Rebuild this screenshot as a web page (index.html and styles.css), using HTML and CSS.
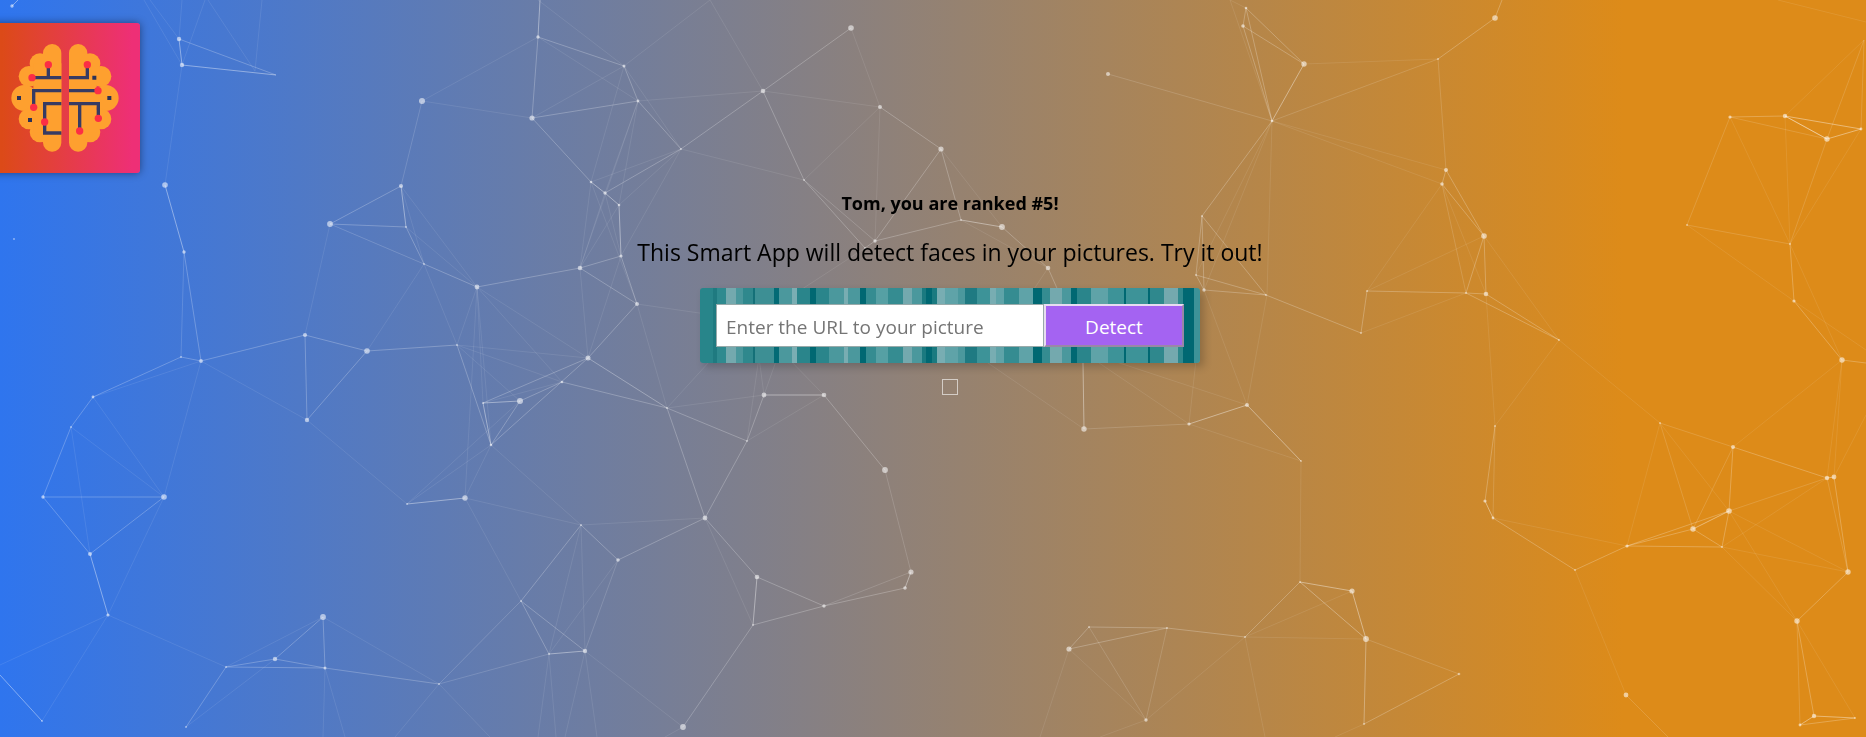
FILE: index.html
```html
<!DOCTYPE html>
<html lang="en">
<head>
<meta charset="utf-8">
<meta name="viewport" content="width=device-width, initial-scale=1">
<title>Smart App</title>
<link rel="stylesheet" href="styles.css">
</head>
<body>
<svg class="particles" viewBox="0 0 1866 737" preserveAspectRatio="xMidYMid slice" aria-hidden="true">
  <g class="links">
    <path class="link-strong" d="M1304 64L1272 121M12 6L18 0M591 182L605 193L619 205L621 256M1785 116L1861 129L1827 139ZM1693 529L1729 511M1485 501L1493 518M1827 478L1834 477M1814 716L1855 718M1814 716L1800 725M483 403L520 401M483 403L491 445M549 654L585 651M407 504L465 498M764 395L824 395M911 572L905 588M961 220L1002 227M1189 424L1247 405L1301 461M1300 582L1352 591L1366 639M179 39L182 65L276 75M757 577L753 625M165 185L184 252M401 186L406 227M1084 429L1083 363M538 37L540 0M108 615L90 554M0 675L42 721"/>
    <path class="link-medium" d="M179 39L276 75M875 241L961 220M865 248L875 241M181 357L201 361M1272 121L1246 8M1272 121L1243 26M1693 529L1722 547L1729 511M538 37L624 66L638 101L681 149L763 91L851 28M538 37L532 118L591 182M532 118L638 101M681 149L605 193M880 107L941 149L875 241M401 186L330 224L406 227L424 264L477 287L580 268L621 256M580 268L637 304L588 358L483 403M637 304L621 256M305 335L367 351L457 345L491 445M367 351L307 420L305 335M305 335L201 361M562 382L520 401L491 445L588 358M562 382L667 408L747 441L705 518L618 560L581 525L521 601L585 651M764 395L747 441M885 470L824 395M824 606L753 625M705 518L757 577L824 606L905 588M667 408L588 358M667 408L705 518M521 601L549 654M763 91L804 180L865 248M1002 227L1048 268L1060 295M941 149L961 220M1272 121L1202 216L1196 275L1204 290L1202 216L1266 295L1204 290M1196 275L1266 295L1361 333L1367 291L1466 293L1486 294L1484 236L1466 293M1246 8L1304 64L1243 26ZM1438 59L1495 18L1502 0M1446 170L1442 184L1484 236L1446 170M1466 293L1559 340L1486 294M1730 117L1785 116L1827 139M1790 244L1794 301L1842 360L1866 363M93 397L71 427L43 497L164 497L90 554L43 497M93 397L181 357M184 252L201 361M226 667L275 659L325 668L323 617L275 659M226 667L325 668M226 667L186 727M1089 627L1167 628L1245 637L1300 582L1366 639L1364 724L1459 674M1069 649L1089 627M1069 649L1167 628M1495 426L1485 501M1493 518L1575 570L1627 546L1693 529M1627 546L1722 547M1627 546L1729 511M1827 478L1733 447L1729 511M1848 572L1834 477M1848 572L1797 621L1814 716M1800 725L1855 718"/>
    <path class="link-low" d="M1108 74L1272 121L1438 59L1446 170M1466 293L1442 184M1730 117L1827 139M1730 117L1687 225L1790 244L1827 139L1864 40L1861 129M181 357L184 252M325 668L439 684L549 654M1167 628L1146 720L1089 627M1459 674L1366 639M1084 429L1189 424M1495 426L1493 518M1729 511L1827 478L1848 572M1733 447L1660 423L1693 529L1733 447M1797 621L1800 725M1626 695L1668 737M422 101L401 186M683 727L753 625M885 470L911 572L824 606M585 651L618 560"/>
    <path class="link-faint" d="M624 66L710 0L763 91L880 107L851 28M638 101L763 91M624 66L532 118M538 37L638 101L580 268M624 66L591 182L681 149L619 205M624 66L681 149L621 256M638 101L605 193M638 101L619 205M681 149L804 180L880 107L875 241M804 180L875 241M538 37L422 101L532 118M538 0L624 66M591 182L637 304M605 193L580 268L619 205M591 182L580 268L588 358L621 256M605 193L621 256M401 186L477 287L406 227M401 186L424 264L330 224L305 335M330 224L424 264L367 351M477 287L457 345M477 287L483 403L562 382L477 287L491 445M457 345L588 358L667 408M457 345L520 401M457 345L562 382M477 287L465 498L491 445M477 287L588 358M424 264L457 345M307 420L201 361L93 397L164 497L71 427L90 554M307 420L407 504L520 401M407 504L491 445M465 498L581 525L705 518M465 498L521 601L439 684M491 445L581 525L585 651M581 525L549 654L618 560M705 518L753 625L683 727M747 441L824 395M667 408L764 395M764 395L780 350M764 395L758 350M824 395L780 350M747 441L760 350M667 408L637 304L720 316M667 408L720 350M865 248L770 310M941 149L1002 227M1048 268L1020 310M804 180L875 241M961 220L1048 268M1272 121L1196 275M1272 121L1204 290M1272 121L1267 295L1247 405M1272 121L1442 184M1272 121L1446 170M1304 64L1438 59M1246 8L1230 0L1272 121M1442 184L1367 291L1484 236M1442 184L1486 294M1466 293L1361 333M1484 236L1559 340L1660 423L1627 546M1559 340L1495 426L1486 294M1785 116L1790 244L1861 129M1785 116L1864 40M1730 117L1790 244L1842 360M1687 225L1794 301L1866 350M1660 423L1729 511L1848 572L1722 547L1827 478L1842 360L1834 477L1866 415M1733 447L1842 360M1729 511L1797 621L1722 547M1797 621L1855 718M1493 518L1627 546M1575 570L1626 695M1778 0L1866 22M1301 461L1300 582M1301 461L1189 424L1080 350L1247 405L1204 290M1189 424L1196 360M1084 429L940 330M1245 637L1366 639M1245 637L1352 591M1245 637L1146 720L1069 649L1040 737M1245 637L1265 737M1366 639L1364 724L1335 737M1300 582L1366 639M1146 720L1100 737M144 0L182 65M150 0L179 39M179 39L182 0M182 65L205 0M182 65L165 185M208 0L255 71L262 0M108 615L226 667L323 617L439 684L325 668M108 615L42 721M108 615L0 665M108 615L164 497L201 361M186 727L275 659M325 668L345 737M325 668L323 737M439 684L521 601M439 684L490 737M439 684L395 737M549 654L538 737M549 654L556 737M585 651L565 737M585 651L597 737M683 727L665 737M585 651L683 727"/>
  </g>
  <g class="nodes">
    <g class="node-small"><circle cx="14" cy="239" r="1"/><circle cx="406" cy="227" r="1"/><circle cx="424" cy="264" r="1"/><circle cx="181" cy="357" r="1"/><circle cx="457" cy="345" r="1"/><circle cx="681" cy="149" r="1"/><circle cx="804" cy="180" r="1"/><circle cx="865" cy="248" r="1"/><circle cx="961" cy="220" r="1"/><circle cx="1202" cy="216" r="1"/><circle cx="1196" cy="275" r="1"/><circle cx="1266" cy="295" r="1"/><circle cx="1367" cy="291" r="1"/><circle cx="1361" cy="333" r="1"/><circle cx="1438" cy="59" r="1"/><circle cx="1466" cy="293" r="1"/><circle cx="1559" cy="340" r="1"/><circle cx="1687" cy="225" r="1"/><circle cx="1790" cy="244" r="1"/><circle cx="71" cy="427" r="1"/><circle cx="407" cy="504" r="1"/><circle cx="226" cy="667" r="1"/><circle cx="186" cy="727" r="1"/><circle cx="42" cy="721" r="1"/><circle cx="439" cy="684" r="1"/><circle cx="483" cy="403" r="1"/><circle cx="667" cy="408" r="1"/><circle cx="747" cy="441" r="1"/><circle cx="581" cy="525" r="1"/><circle cx="753" cy="625" r="1"/><circle cx="521" cy="601" r="1"/><circle cx="549" cy="654" r="1"/><circle cx="1301" cy="461" r="1"/><circle cx="1300" cy="582" r="1"/><circle cx="1245" cy="637" r="1"/><circle cx="1167" cy="628" r="1"/><circle cx="1089" cy="627" r="1"/><circle cx="1364" cy="724" r="1"/><circle cx="1495" cy="426" r="1"/><circle cx="1575" cy="570" r="1"/><circle cx="1660" cy="423" r="1"/><circle cx="1722" cy="547" r="1"/><circle cx="1459" cy="674" r="1.3"/><circle cx="1855" cy="718" r="1"/></g>
    <g class="node-large"><circle cx="12" cy="6" r="1.7"/><circle cx="179" cy="39" r="2.2"/><circle cx="182" cy="65" r="2.2"/><circle cx="165" cy="185" r="2.8"/><circle cx="184" cy="252" r="1.7"/><circle cx="422" cy="101" r="3"/><circle cx="401" cy="186" r="2.1"/><circle cx="330" cy="224" r="2.9"/><circle cx="305" cy="335" r="2.1"/><circle cx="367" cy="351" r="2.8"/><circle cx="201" cy="361" r="1.9"/><circle cx="538" cy="37" r="1.7"/><circle cx="624" cy="66" r="1.5"/><circle cx="638" cy="101" r="1.4"/><circle cx="532" cy="118" r="2.6"/><circle cx="763" cy="91" r="2.3"/><circle cx="851" cy="28" r="2.8"/><circle cx="880" cy="107" r="2"/><circle cx="591" cy="182" r="1.3"/><circle cx="605" cy="193" r="1.7"/><circle cx="619" cy="205" r="1.3"/><circle cx="621" cy="256" r="1.6"/><circle cx="580" cy="268" r="2.3"/><circle cx="637" cy="304" r="2"/><circle cx="477" cy="287" r="2.4"/><circle cx="588" cy="358" r="2.5"/><circle cx="875" cy="241" r="1.7"/><circle cx="941" cy="149" r="2.6"/><circle cx="1108" cy="74" r="2"/><circle cx="1246" cy="8" r="1.3"/><circle cx="1243" cy="26" r="1.8"/><circle cx="1304" cy="64" r="2.7"/><circle cx="1272" cy="121" r="1.3"/><circle cx="1002" cy="227" r="2.9"/><circle cx="1048" cy="268" r="2.3"/><circle cx="1204" cy="290" r="1.7"/><circle cx="1495" cy="18" r="2.8"/><circle cx="1446" cy="170" r="2"/><circle cx="1442" cy="184" r="1.8"/><circle cx="1484" cy="236" r="2.8"/><circle cx="1486" cy="294" r="2.3"/><circle cx="1730" cy="117" r="1.6"/><circle cx="1785" cy="116" r="2.2"/><circle cx="1827" cy="139" r="2.7"/><circle cx="1861" cy="129" r="1.4"/><circle cx="1794" cy="301" r="1.6"/><circle cx="1842" cy="360" r="2.7"/><circle cx="93" cy="397" r="1.4"/><circle cx="43" cy="497" r="1.7"/><circle cx="164" cy="497" r="2.8"/><circle cx="90" cy="554" r="2"/><circle cx="108" cy="615" r="1.6"/><circle cx="307" cy="420" r="2.2"/><circle cx="465" cy="498" r="2.7"/><circle cx="323" cy="617" r="2.9"/><circle cx="275" cy="659" r="2.2"/><circle cx="325" cy="668" r="1.5"/><circle cx="520" cy="401" r="3"/><circle cx="491" cy="445" r="1.3"/><circle cx="562" cy="382" r="1.3"/><circle cx="764" cy="395" r="2.4"/><circle cx="824" cy="395" r="2.3"/><circle cx="885" cy="470" r="2.9"/><circle cx="705" cy="518" r="2.4"/><circle cx="618" cy="560" r="1.8"/><circle cx="682" cy="577" r="0"/><circle cx="757" cy="577" r="2.3"/><circle cx="824" cy="606" r="1.7"/><circle cx="911" cy="572" r="2.6"/><circle cx="905" cy="588" r="1.8"/><circle cx="585" cy="651" r="2.2"/><circle cx="683" cy="727" r="2.9"/><circle cx="1084" cy="429" r="2.7"/><circle cx="1189" cy="424" r="1.6"/><circle cx="1247" cy="405" r="2"/><circle cx="1352" cy="591" r="2.6"/><circle cx="1366" cy="639" r="2.9"/><circle cx="1069" cy="649" r="2.6"/><circle cx="1146" cy="720" r="1.7"/><circle cx="1485" cy="501" r="1.6"/><circle cx="1493" cy="518" r="1.4"/><circle cx="1627" cy="546" r="1.6"/><circle cx="1733" cy="447" r="2"/><circle cx="1827" cy="478" r="2.2"/><circle cx="1834" cy="477" r="2.4"/><circle cx="1729" cy="511" r="2.8"/><circle cx="1693" cy="529" r="2.7"/><circle cx="1848" cy="572" r="2.7"/><circle cx="1797" cy="621" r="2.7"/><circle cx="1626" cy="695" r="2.4"/><circle cx="1814" cy="716" r="2.2"/><circle cx="1800" cy="725" r="1.4"/></g>
  </g>
</svg>

<header class="header">
  <div class="logo">
    <svg class="logo-icon" viewBox="33 132 324 324" role="img" aria-label="Brain logo">
      <g fill="#fea02f">
        <rect x="129" y="132" width="55" height="323" rx="27"/><circle cx="120" cy="191" r="31"/><circle cx="87" cy="229" r="31"/><circle cx="73" cy="294" r="39"/><circle cx="87" cy="357" r="31"/><circle cx="120" cy="396" r="31"/><path d="M100 190H184V397H100Z"/>
        <rect x="207" y="132" width="55" height="323" rx="27"/><circle cx="270" cy="191" r="31"/><circle cx="303" cy="229" r="31"/><circle cx="317" cy="294" r="39"/><circle cx="303" cy="357" r="31"/><circle cx="270" cy="396" r="31"/><path d="M207 190H290V397H207Z"/>
      </g>
      <g fill="none" stroke="#373b63" stroke-width="10">
        <path d="M96 233H184M145 194V233M101 322V272H184M184 399H134V311H184"/>
        <path d="M207 233H262V194M207 272H294M207 311H295V355M239 311V393"/>
      </g>
      <path fill="#2c3257" d="M51 288h12v12H51zM84 354h12v12H84zM277 227h12v12H277zM322 288h12v12H322z"/>
      <g fill="#fc2e45">
        <circle cx="145" cy="194" r="11"/><circle cx="96" cy="233" r="11"/><circle cx="101" cy="322" r="11"/><circle cx="134" cy="366" r="11"/><circle cx="262" cy="194" r="11"/><circle cx="294" cy="272" r="11"/><circle cx="295" cy="355" r="11"/><circle cx="239" cy="393" r="11"/>
      </g>
    </svg>
  </div>
</header>

<main class="content">
  <h1 class="rank">Tom, you are ranked #5!</h1>
  <p class="intro">This Smart App will detect faces in your pictures. Try it out!</p>
  <form class="detect-form">
    <input class="url-input" type="text" placeholder="Enter the URL to your picture" aria-label="Picture URL">
    <button class="detect-button" type="button">Detect</button>
  </form>
  <div class="result-image"></div>
</main>
</body>
</html>
```

FILE: styles.css
```css
* {
  box-sizing: border-box;
}

body {
  margin: 0;
  min-height: 100vh;
  overflow: hidden;
  font-family: "Open Sans", "Noto Sans", sans-serif;
  color: #000;
  background: linear-gradient(90deg, #2f75ee 0%, #dd8b19 87%);
}

.particles {
  position: fixed;
  inset: 0;
  z-index: -1;
  width: 100%;
  height: 100%;
}

.links {
  fill: none;
  stroke: #fff;
  stroke-width: 1;
}

.link-strong {
  opacity: 0.4;
}

.link-medium {
  opacity: 0.24;
}

.link-low {
  opacity: 0.15;
}

.link-faint {
  opacity: 0.09;
}

.nodes {
  fill: #fff;
}

.node-small {
  opacity: 0.45;
}

.node-large {
  opacity: 0.56;
}

.header {
  padding-top: 23px;
}

.logo {
  display: flex;
  align-items: center;
  justify-content: center;
  width: 150px;
  height: 150px;
  margin-left: -10px;
  border-radius: 3px;
  background: linear-gradient(90deg, #dc4a18 8%, #ee2f76 95%);
  box-shadow: 0 0 8px rgba(0, 0, 0, 0.45);
}

.logo-icon {
  width: 108px;
  height: 108px;
}

.content {
  display: flex;
  flex-direction: column;
  align-items: center;
  padding: 16px 0 0 34px;
}

.rank {
  margin: 0;
  font-size: 18px;
  line-height: 28px;
  font-weight: 700;
}

.intro {
  margin: 16px 0;
  font-size: 23px;
  line-height: 39px;
  font-weight: 400;
}

.detect-form {
  display: flex;
  width: 500px;
  max-width: 100%;
  padding: 16px;
  border-radius: 3px;
  box-shadow: 4px 4px 8px rgba(0, 0, 0, 0.2);
  background: linear-gradient(90deg,
    #28858a 0 13px, #1f7a80 13px 17px, #2f8a8f 17px 26px, #74a9ae 26px 36px,
    #4a979c 36px 43px, #2f888d 43px 53px, #147078 53px 55px, #3d8f94 55px 74px,
    #036b75 74px 79px, #4b989d 79px 92px, #7aaeb3 92px 97px, #2a858b 97px 110px,
    #006872 110px 116px, #2a858b 116px 129px, #4b989d 129px 144px, #78adb2 144px 148px,
    #4b989d 148px 160px, #006872 160px 166px, #358c91 166px 176px, #56a0a4 176px 188px,
    #358c91 188px 203px, #74a9ae 203px 212px, #4b989d 212px 222px, #1a7a80 222px 226px,
    #006872 226px 232px, #1a7a80 232px 237px, #78adb2 237px 245px, #5fa3a8 245px 258px,
    #4b989d 258px 265px, #1f7a82 265px 277px, #3d9398 277px 290px, #78adb2 290px 296px,
    #5fa3a8 296px 304px, #358c91 304px 319px, #5fa3a8 319px 333px, #006872 333px 342px,
    #358c91 342px 350px, #74a9ae 350px 362px, #4b989d 362px 371px, #006872 371px 377px,
    #2a858b 377px 391px, #5fa3a8 391px 408px, #3d9398 408px 424px, #006872 424px 426px,
    #3d9398 426px 448px, #006872 448px 450px, #2f888d 450px 464px, #74a9ae 464px 478px,
    #2f888d 478px 483px, #006872 483px 494px, #3d9398 494px 500px);
}

.url-input {
  flex: 1;
  min-width: 0;
  height: 43px;
  padding: 2px 9px 0;
  border: 1px solid #9aa;
  border-radius: 0;
  background: #fff;
  font: inherit;
  font-size: 19px;
}

.url-input::placeholder {
  color: #757575;
}

.detect-button {
  width: 140px;
  height: 43px;
  padding: 2px 0 0;
  border: 2px solid;
  border-color: #e8dcf0 #9a86a8 #9a86a8 #e8dcf0;
  background: #a463f2;
  color: #fff;
  font: inherit;
  font-size: 19px;
  font-weight: 500;
}

.result-image {
  width: 16px;
  height: 16px;
  margin-top: 16px;
  border: 1px solid rgba(255, 255, 255, 0.6);
}
```
